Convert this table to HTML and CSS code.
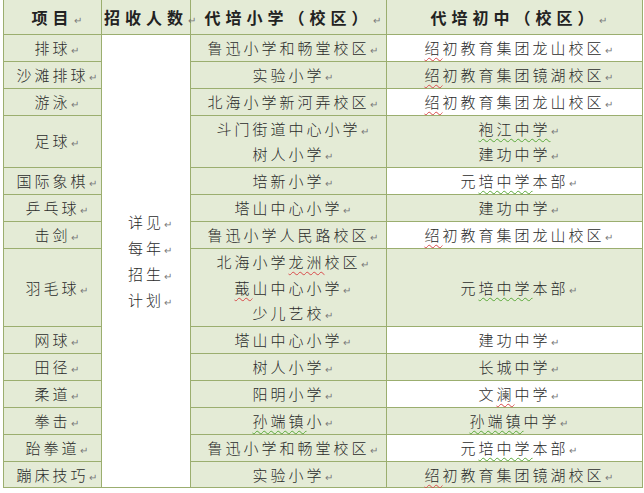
FILE: index.html
```html
<!DOCTYPE html>
<html lang="zh-CN">
<head>
<meta charset="utf-8">
<title>代培学校一览</title>
<link rel="stylesheet" href="styles.css">
</head>
<body>
<table class="grid">
  <colgroup>
    <col class="c1"><col class="c2"><col class="c3"><col class="c4">
  </colgroup>
  <thead>
    <tr class="head">
      <th>项目<span class="pm">↵</span></th>
      <th>招收人数<span class="pm">↵</span></th>
      <th>代培小学（校区）<span class="pm">↵</span></th>
      <th>代培初中（校区）<span class="pm">↵</span></th>
    </tr>
  </thead>
  <tbody>
    <tr>
      <td class="g">排球<span class="pm">↵</span></td>
      <td class="w plan" rowspan="14">
        <p>详见<span class="pm">↵</span></p>
        <p>每年<span class="pm">↵</span></p>
        <p>招生<span class="pm">↵</span></p>
        <p>计划<span class="pm">↵</span></p>
      </td>
      <td class="g">鲁迅小学和畅堂校区<span class="pm">↵</span></td>
      <td class="w"><span class="red">绍</span>初教育集团龙山校区<span class="pm">↵</span></td>
    </tr>
    <tr>
      <td class="g">沙滩排球<span class="pm">↵</span></td>
      <td class="g">实验小学<span class="pm">↵</span></td>
      <td class="g"><span class="red">绍</span>初教育集团镜湖校区<span class="pm">↵</span></td>
    </tr>
    <tr>
      <td class="g">游泳<span class="pm">↵</span></td>
      <td class="g">北海小学新河弄校区<span class="pm">↵</span></td>
      <td class="w"><span class="red">绍</span>初教育集团龙山校区<span class="pm">↵</span></td>
    </tr>
    <tr>
      <td class="g">足球<span class="pm">↵</span></td>
      <td class="g">
        <p>斗门街道中心小学<span class="pm">↵</span></p>
        <p>树人小学<span class="pm">↵</span></p>
      </td>
      <td class="g">
        <p><span class="grn">袍江中学</span><span class="pm">↵</span></p>
        <p>建功中学<span class="pm">↵</span></p>
      </td>
    </tr>
    <tr>
      <td class="g">国际象棋<span class="pm">↵</span></td>
      <td class="g">培新小学<span class="pm">↵</span></td>
      <td class="w">元<span class="grn">培中学</span>本部<span class="pm">↵</span></td>
    </tr>
    <tr>
      <td class="g">乒乓球<span class="pm">↵</span></td>
      <td class="g">塔山中心小学<span class="pm">↵</span></td>
      <td class="g">建功中学<span class="pm">↵</span></td>
    </tr>
    <tr>
      <td class="g">击剑<span class="pm">↵</span></td>
      <td class="g">鲁迅小学人民路校区<span class="pm">↵</span></td>
      <td class="w"><span class="red">绍</span>初教育集团龙山校区<span class="pm">↵</span></td>
    </tr>
    <tr>
      <td class="g">羽毛球<span class="pm">↵</span></td>
      <td class="g">
        <p>北海小学<span class="red">龙洲</span>校区<span class="pm">↵</span></p>
        <p><span class="red">蕺</span>山中心小学<span class="pm">↵</span></p>
        <p>少儿艺校<span class="pm">↵</span></p>
      </td>
      <td class="g">元<span class="grn">培中学</span>本部<span class="pm">↵</span></td>
    </tr>
    <tr>
      <td class="g">网球<span class="pm">↵</span></td>
      <td class="g">塔山中心小学<span class="pm">↵</span></td>
      <td class="w">建功中学<span class="pm">↵</span></td>
    </tr>
    <tr>
      <td class="g">田径<span class="pm">↵</span></td>
      <td class="g">树人小学<span class="pm">↵</span></td>
      <td class="g">长城中学<span class="pm">↵</span></td>
    </tr>
    <tr>
      <td class="g">柔道<span class="pm">↵</span></td>
      <td class="g">阳明小学<span class="pm">↵</span></td>
      <td class="w">文<span class="red">澜</span>中学<span class="pm">↵</span></td>
    </tr>
    <tr>
      <td class="g">拳击<span class="pm">↵</span></td>
      <td class="g"><span class="grn">孙端镇</span>小<span class="pm">↵</span></td>
      <td class="g"><span class="grn">孙端镇</span>中学<span class="pm">↵</span></td>
    </tr>
    <tr>
      <td class="g">跆拳道<span class="pm">↵</span></td>
      <td class="g">鲁迅小学和畅堂校区<span class="pm">↵</span></td>
      <td class="w">元<span class="grn">培中学</span>本部<span class="pm">↵</span></td>
    </tr>
    <tr>
      <td class="g">蹦床技巧<span class="pm">↵</span></td>
      <td class="g">实验小学<span class="pm">↵</span></td>
      <td class="g"><span class="red">绍</span>初教育集团镜湖校区<span class="pm">↵</span></td>
    </tr>
  </tbody>
</table>
</body>
</html>
```

FILE: styles.css
```css
html, body {
  margin: 0;
  padding: 0;
  background: #ffffff;
}

body {
  font-family: "Noto Sans CJK SC", "Noto Sans", sans-serif;
  color: #2b2b2b;
}

.grid {
  border-collapse: collapse;
  table-layout: fixed;
  width: 639px;
  margin-left: 3px;
}

.c1 { width: 98px; }
.c2 { width: 89px; }
.c3 { width: 196px; }
.c4 { width: 256px; }

.grid th,
.grid td {
  border: 1px solid #9bae6f;
  padding: 0;
  text-align: center;
  vertical-align: middle;
  white-space: nowrap;
}

.grid td {
  font-size: 15px;
  line-height: 25.85px;
  letter-spacing: 3px;
  font-weight: 300;
}

.head th {
  border-top: none;
  height: 34px;
  line-height: 20px;
  background: #e4ebd6;
  font-size: 16px;
  font-weight: 700;
  letter-spacing: 5px;
  color: #222;
}

.grid p {
  margin: 0;
  height: 25.85px;
}

.g { background: #e4ebd6; }
.w { background: #ffffff; }

.plan {
  letter-spacing: 2px;
}

.pm {
  display: inline-block;
  width: 0;
  line-height: 0;
  font-size: 10px;
  font-weight: 400;
  letter-spacing: 0;
  color: #7a7a7a;
  vertical-align: baseline;
}

.red {
  text-decoration: underline wavy #d84a4a;
  text-decoration-thickness: 1px;
  text-underline-offset: 3px;
}

.grn {
  text-decoration: underline wavy #5aa83a;
  text-decoration-thickness: 1px;
  text-underline-offset: 3px;
}
```
